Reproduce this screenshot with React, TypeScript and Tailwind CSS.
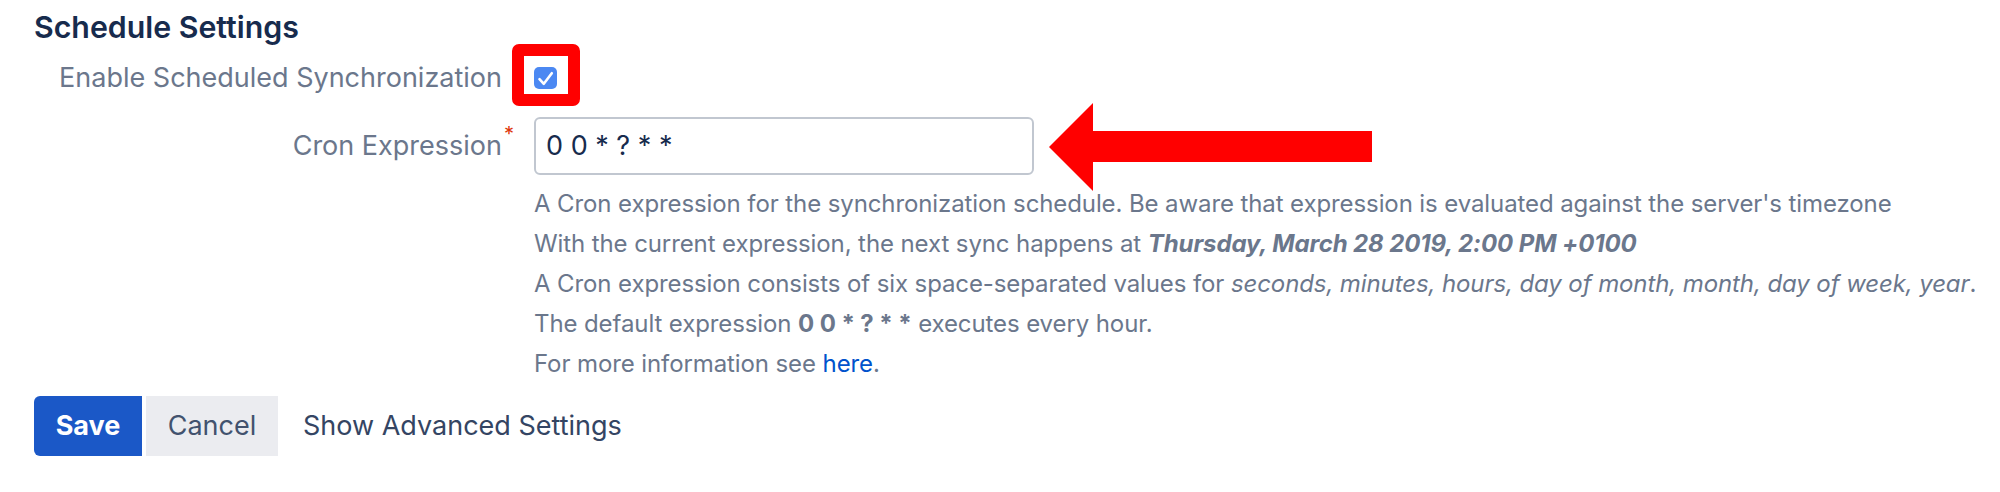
import React from "react";

const font = { fontFamily: "Inter, 'Noto Sans', sans-serif" };

function Checkbox() {
  return (
    <span className="block h-[22px] w-[23px] rounded-[5px] bg-[#4b88f2]">
      <svg width="23" height="22" viewBox="0 0 23 22" fill="none">
        <path d="M5.5 12.2 L9.8 16.8 L17.8 6.2" stroke="#ffffff" strokeWidth="2.6" strokeLinecap="round" strokeLinejoin="round" />
      </svg>
    </span>
  );
}

export default function App() {
  return (
    <div className="relative h-[492px] w-[2000px] bg-white pl-[34px] pt-[7px]" style={font}>
      <h2 className="text-[30.3px] font-semibold leading-[40px] text-[#172b4d]">Schedule Settings</h2>

      <div className="flex h-[62px] items-center">
        <div className="w-[468px] text-right text-[27px] text-[#6b778c]">Enable Scheduled Synchronization</div>
        <div className="relative ml-[32px] flex items-center">
          <Checkbox />
          <div className="pointer-events-none absolute left-[-22px] top-[-23px] h-[62px] w-[68px] rounded-[7px] border-[12px] border-[#ff0000]" />
        </div>
      </div>

      <div className="mt-[8px] flex h-[58px] items-center">
        <div className="relative w-[468px] text-right text-[27px] text-[#6b778c]">
          Cron Expression
          <span className="absolute right-[-12px] top-[-2px] text-[20px] leading-none text-[#de350b]">*</span>
        </div>
        <div className="ml-[32px] flex h-[58px] w-[500px] items-center rounded-[6px] border-2 border-[#c1c7d0] bg-white px-[10px] text-[27px] text-[#172b4d]">
          0 0 * ? * *
        </div>
      </div>

      <div className="ml-[500px] mt-[9px] text-[24px] leading-[40px] tracking-[-0.1px] text-[#6b778c]">
        <div>A Cron expression for the synchronization schedule. Be aware that expression is evaluated against the server's timezone</div>
        <div>
          With the current expression, the next sync happens at <b className="font-bold italic">Thursday, March 28 2019, 2:00 PM +0100</b>
        </div>
        <div>
          A Cron expression consists of six space-separated values for <i>seconds, minutes, hours, day of month, month, day of week, year</i>.
        </div>
        <div>
          The default expression <b className="font-bold">0 0 * ? * *</b> executes every hour.
        </div>
        <div>
          For more information see <a className="text-[#0052cc]">here</a>.
        </div>
      </div>

      <div className="mt-[12px] flex h-[60px] items-stretch gap-[4px] text-[27px]">
        <button className="flex w-[108px] items-center justify-center rounded-l-[6px] bg-[#1b58c7] font-bold text-white">Save</button>
        <button className="flex w-[132px] items-center justify-center bg-[#ebecf0] text-[#42526e]">Cancel</button>
        <button className="flex items-center px-[21px] text-[#344563]">Show Advanced Settings</button>
      </div>

      <svg className="pointer-events-none absolute left-0 top-0" width="2000" height="492">
        <polygon points="1049,147 1093,103 1093,131 1372,131 1372,162 1093,162 1093,191" fill="#ff0000" />
      </svg>
    </div>
  );
}
